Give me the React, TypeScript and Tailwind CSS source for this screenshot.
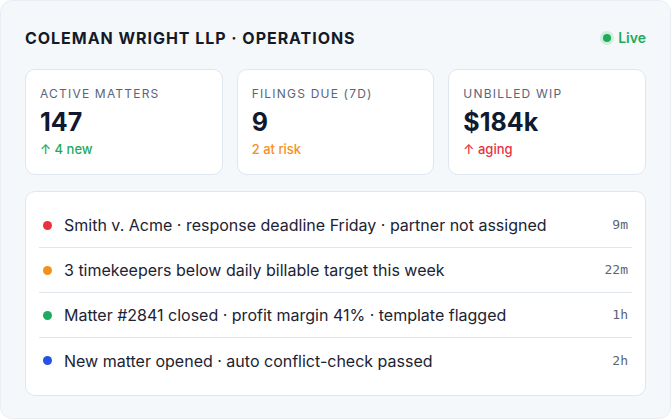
const stats = [
  { label: 'Active matters', value: '147', note: '↑ 4 new', tone: 'text-[#1faa5c]' },
  { label: 'Filings due (7d)', value: '9', note: '2 at risk', tone: 'text-[#f5901a]' },
  { label: 'Unbilled WIP', value: '$184k', note: '↑ aging', tone: 'text-[#e8323f]' },
];

const events = [
  { dot: 'bg-[#e8323f]', text: 'Smith v. Acme · response deadline Friday · partner not assigned', ago: '9m' },
  { dot: 'bg-[#f5901a]', text: '3 timekeepers below daily billable target this week', ago: '22m' },
  { dot: 'bg-[#1faa62]', text: 'Matter #2841 closed · profit margin 41% · template flagged', ago: '1h' },
  { dot: 'bg-[#2452e6]', text: 'New matter opened · auto conflict-check passed', ago: '2h' },
];

export default function App() {
  return (
    <div className="h-[419px] w-[671px] bg-white font-['Inter',sans-serif]">
      <div className="h-full rounded-xl border border-[#e9eef4] bg-[#f5f8fb] px-6 pt-[25px]">
        <div className="flex items-center justify-between">
          <h1 className="text-base font-bold uppercase tracking-[0.06em] text-[#141a26]">
            Coleman Wright LLP · Operations
          </h1>
          <div className="flex items-center gap-1 text-sm font-semibold text-[#1faa5c]">
            <span className="flex h-3.5 w-3.5 items-center justify-center rounded-full bg-[#cfeedd]">
              <span className="h-2 w-2 rounded-full bg-[#1faa5c]" />
            </span>
            Live
          </div>
        </div>

        <div className="mt-[19px] grid grid-cols-3 gap-3.5">
          {stats.map((s) => (
            <div key={s.label} className="h-[106px] rounded-[10px] border border-[#e0e6ef] bg-white px-[14px] pt-[16px]">
              <div className="text-xs uppercase tracking-[0.1em] text-[#5b6478]">{s.label}</div>
              <div className="mt-[4px] text-[25px] font-bold leading-8 text-[#0f1a30]">{s.value}</div>
              <div className={`mt-[2px] text-[13px] font-medium ${s.tone}`}>{s.note}</div>
            </div>
          ))}
        </div>

        <div className="mt-4 rounded-[10px] border border-[#e0e6ef] bg-white px-[13px] pb-3 pt-[11px]">
          {events.map((e, i) => (
            <div
              key={e.ago}
              className={`flex h-[45px] items-center gap-3 px-1 ${i < events.length - 1 ? 'border-b border-[#e0e6ef]' : ''}`}
            >
              <span className={`h-[9px] w-[9px] shrink-0 rounded-full ${e.dot}`} />
              <span className="flex-1 truncate text-base text-[#1c2333]">{e.text}</span>
              <span className="font-['DejaVu_Sans_Mono',monospace] text-[13px] text-[#5b6478]">{e.ago}</span>
            </div>
          ))}
        </div>
      </div>
    </div>
  );
}
